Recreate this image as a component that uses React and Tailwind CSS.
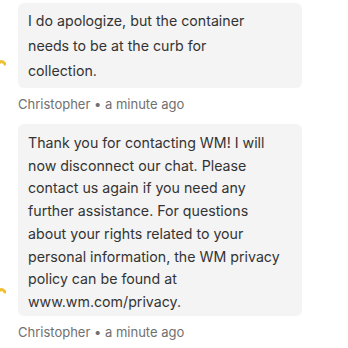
import React from 'react';

const Avatar = () => (
    <div className="w-[18px] shrink-0 flex items-end overflow-hidden">
        <svg width="18" height="10" viewBox="0 0 18 10" className="-ml-[12px] mb-[20px]">
            <path d="M9 9 C 11 3, 14 2, 17 6" stroke="#f0c030" strokeWidth="3" fill="none" strokeLinecap="round" />
        </svg>
    </div>
);

const Message = ({ lines, box }) => (
    <div>
        <div className="flex">
            <Avatar />
            <div className={`w-[284px] bg-[#f4f4f4] rounded-md pl-[10px] pr-[8px] text-[14.2px] text-[#333] ${box}`}>
                {lines.map((line, i) => (
                    <span key={i} className="block whitespace-nowrap">{line}</span>
                ))}
            </div>
        </div>
        <div className="pl-[18px] mt-[7px] text-[13px] text-[#707070] leading-[18px]">
            Christopher • a minute ago
        </div>
    </div>
);

const first = [
    'I do apologize, but the container',
    'needs to be at the curb for',
    'collection.',
];

const second = [
    'Thank you for contacting WM! I will',
    'now disconnect our chat. Please',
    'contact us again if you need any',
    'further assistance. For questions',
    'about your rights related to your',
    'personal information, the WM privacy',
    'policy can be found at',
    'www.wm.com/privacy.',
];

export default function App() {
    return (
        <div className="w-[348px] h-[348px] bg-white overflow-hidden pt-[3px] flex flex-col gap-[11px]" style={{ fontFamily: 'Inter, "Open Sans", sans-serif' }}>
            <Message lines={first} box="leading-[25px] py-[5px]" />
            <Message lines={second} box="leading-[22.7px] pt-[8px] pb-[2px]" />
        </div>
    );
}
